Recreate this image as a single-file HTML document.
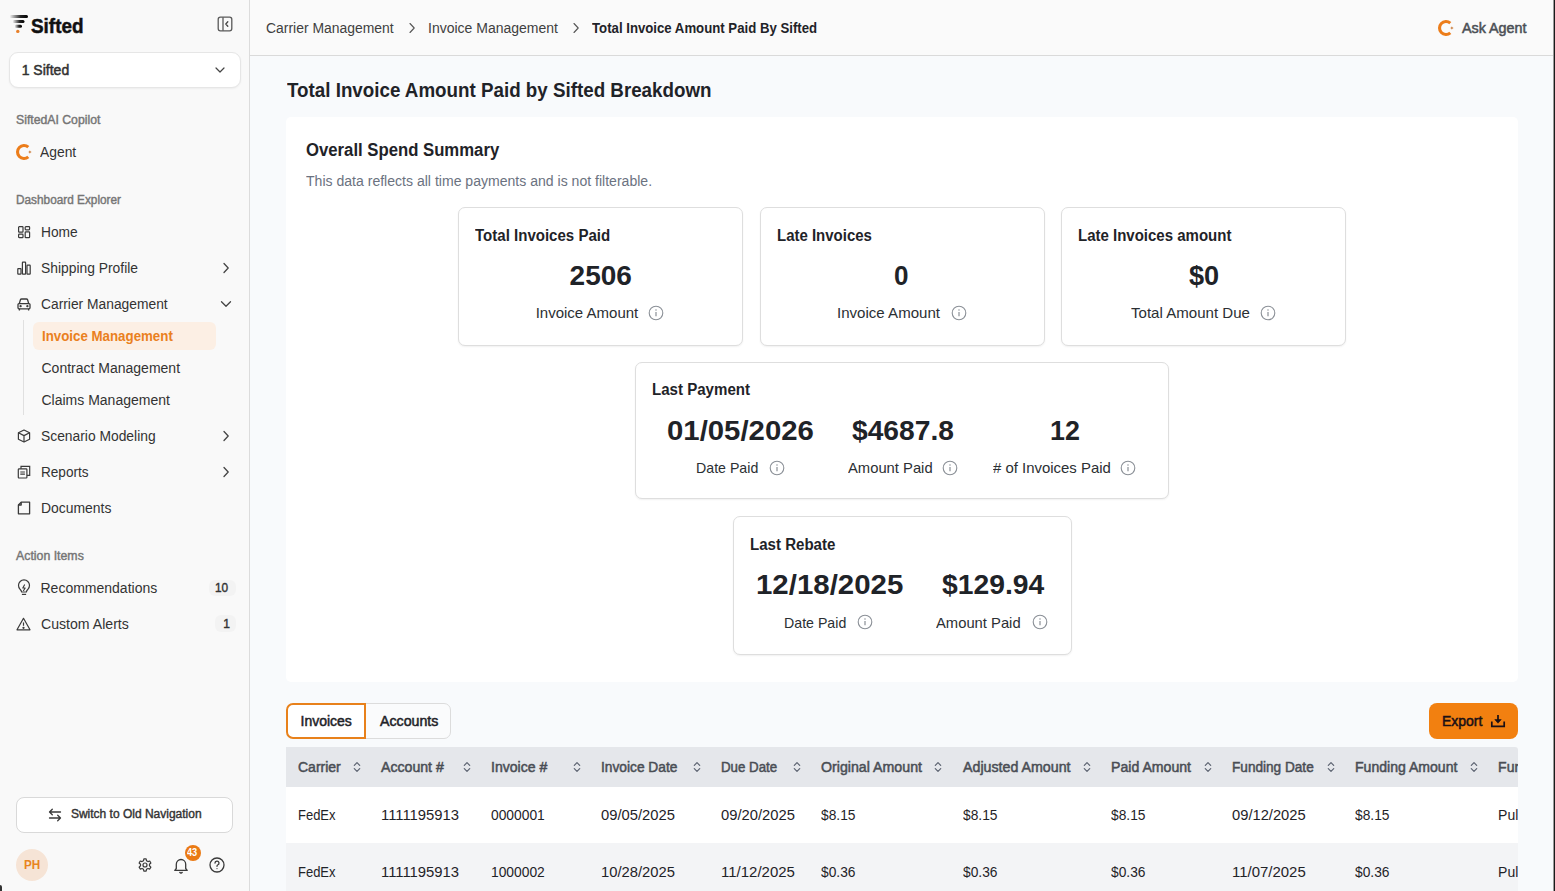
<!DOCTYPE html>
<html><head><meta charset="utf-8">
<style>
*{box-sizing:border-box;margin:0;padding:0}
html,body{width:1555px;height:891px;overflow:hidden}
body{font-family:"Liberation Sans",sans-serif;background:#f8fafc;color:#1f2328;position:relative}
.a{position:absolute;white-space:nowrap;transform-origin:0 50%}
.box{position:absolute}
svg.a{overflow:visible}
</style></head><body>
<!-- sidebar -->
<div class="box" style="left:0;top:0;width:250px;height:891px;background:#f9f9f9;border-right:1px solid #dcdcdc"></div>
<!-- header -->
<div class="box" style="left:250px;top:0;width:1305px;height:56px;background:#fafafa;border-bottom:1px solid #dadada"></div>
<!-- right dark edge -->
<div class="box" style="left:1553px;top:0;width:1px;height:891px;background:#9a9a9a"></div><div class="box" style="left:1554px;top:0;width:1px;height:891px;background:#1a1a1a"></div>

<!-- logo -->
<svg class="a" style="left:8px;top:13px" width="22" height="22" viewBox="0 0 22 22">
<defs><linearGradient id="lg" x1="0" x2="1" y1="0" y2="0"><stop offset="0" stop-color="#000" stop-opacity="0"/><stop offset="0.6" stop-color="#000" stop-opacity="0.85"/><stop offset="1" stop-color="#000"/></linearGradient></defs>
<rect x="1.5" y="2" width="18.5" height="3" rx="1.5" fill="url(#lg)"/>
<rect x="4.5" y="7" width="12" height="3" rx="1.5" fill="url(#lg)"/>
<rect x="6.5" y="11.8" width="7.5" height="3" rx="1.5" fill="url(#lg)"/>
<circle cx="9.8" cy="18.4" r="1.7" fill="#e8802a"/>
</svg>
<!-- collapse icon -->
<svg class="a" style="left:217px;top:16px" width="16" height="16" viewBox="0 0 16 16"><rect x="1.2" y="1.2" width="13.6" height="13.6" rx="2.2" fill="none" stroke="#5a5a5a" stroke-width="1.3"/><line x1="6" y1="1.2" x2="6" y2="14.8" stroke="#5a5a5a" stroke-width="1.3"/><path d="M10.8 5.8 L8.8 8 L10.8 10.2" fill="none" stroke="#444" stroke-width="1.3" stroke-linecap="round" stroke-linejoin="round"/></svg>

<!-- org dropdown -->
<div class="box" style="left:9px;top:52px;width:232px;height:36px;background:#fff;border:1px solid #e6e6e6;border-radius:9px;box-shadow:0 1px 2px rgba(0,0,0,0.05)"></div>
<svg class="a" style="left:213.5px;top:66px" width="12" height="8" viewBox="0 0 12 8"><path d="M2 2 L6 6 L10 2" fill="none" stroke="#444" stroke-width="1.2" stroke-linecap="round" stroke-linejoin="round"/></svg>

<svg class="a" style="left:16px;top:144px" width="16" height="16" viewBox="0 0 16 16"><path d="M12.3 3.1 A6.5 6.5 0 1 0 12.3 12.9" fill="none" stroke="#ec7d1a" stroke-width="3.1" stroke-linecap="butt"/><path d="M13.9 6.2 L14.4 7.5 L15.7 8 L14.4 8.5 L13.9 9.8 L13.4 8.5 L12.1 8 L13.4 7.5 Z" fill="#c46a1f"/></svg>

<!-- nav icons -->
<svg class="a" style="left:17px;top:225px" width="14" height="14" viewBox="0 0 14 14" fill="none" stroke="#3a3a3a" stroke-width="1.2">
<rect x="1.6" y="1.6" width="4.4" height="5.6" rx="0.7"/><rect x="1.6" y="9.2" width="4.4" height="3.4" rx="0.7"/><rect x="8.2" y="1.6" width="4.4" height="3.2" rx="0.7"/><rect x="8.2" y="6.8" width="4.4" height="5.8" rx="0.7"/></svg>
<svg class="a" style="left:17px;top:261px" width="14" height="14" viewBox="0 0 14 14" fill="none" stroke="#3a3a3a" stroke-width="1.2">
<rect x="0.8" y="7.6" width="3.2" height="5.6" rx="0.5"/><rect x="5.4" y="1.2" width="3.2" height="12" rx="0.5"/><rect x="10" y="4.2" width="3.2" height="9" rx="0.5"/></svg>
<svg class="a" style="left:17px;top:297px" width="14" height="15" viewBox="0 0 14 15" fill="none" stroke="#3a3a3a" stroke-width="1.3">
<path d="M2.3 6.6 L3.4 2.8 Q3.7 2 4.6 2 L9.4 2 Q10.3 2 10.6 2.8 L11.7 6.6"/><rect x="1" y="6.6" width="12" height="5.2" rx="1"/><path d="M2.4 11.8 V13.6 M11.6 11.8 V13.6"/><circle cx="3.6" cy="9.2" r="0.5" fill="#3a3a3a"/><circle cx="10.4" cy="9.2" r="0.5" fill="#3a3a3a"/></svg>
<svg class="a" style="left:221.5px;top:262px" width="8" height="12" viewBox="0 0 8 12"><path d="M2 1.5 L6.2 6 L2 10.5" fill="none" stroke="#444" stroke-width="1.3" stroke-linecap="round" stroke-linejoin="round"/></svg>
<svg class="a" style="left:219.5px;top:300px" width="12" height="8" viewBox="0 0 12 8"><path d="M1.5 1.8 L6 6.2 L10.5 1.8" fill="none" stroke="#444" stroke-width="1.3" stroke-linecap="round" stroke-linejoin="round"/></svg>
<!-- subnav line -->
<div class="box" style="left:23px;top:320px;width:1px;height:95px;background:#e0e0e0"></div>
<!-- active sub -->
<div class="box" style="left:33px;top:322px;width:183px;height:28px;background:#fcefe4;border-radius:6px"></div>

<svg class="a" style="left:17px;top:429px" width="14" height="14" viewBox="0 0 14 14" fill="none" stroke="#3a3a3a" stroke-width="1.2" stroke-linejoin="round">
<path d="M7 1 L12.6 3.8 V10.2 L7 13 L1.4 10.2 V3.8 Z"/><path d="M1.4 3.8 L7 6.6 L12.6 3.8 M7 6.6 V13"/></svg>
<svg class="a" style="left:221.5px;top:466px" width="8" height="12" viewBox="0 0 8 12"><path d="M2 1.5 L6.2 6 L2 10.5" fill="none" stroke="#444" stroke-width="1.3" stroke-linecap="round" stroke-linejoin="round"/></svg>
<svg class="a" style="left:17px;top:465px" width="14" height="14" viewBox="0 0 14 14" fill="none" stroke="#3a3a3a" stroke-width="1.2">
<rect x="1.3" y="3.8" width="8.6" height="9.2" rx="0.8"/><path d="M4 3.8 V1.3 H12.7 V10.4 H9.9"/><path d="M3.3 7 H7.9 M3.3 9.2 H7.9"/></svg>
<svg class="a" style="left:221.5px;top:430px" width="8" height="12" viewBox="0 0 8 12"><path d="M2 1.5 L6.2 6 L2 10.5" fill="none" stroke="#444" stroke-width="1.3" stroke-linecap="round" stroke-linejoin="round"/></svg>
<svg class="a" style="left:17px;top:501px" width="14" height="14" viewBox="0 0 14 14" fill="none" stroke="#3a3a3a" stroke-width="1.3" stroke-linejoin="round">
<path d="M4.2 1.2 H12.6 V12.8 H1.4 V4 Z"/><path d="M1.4 4 H4.2 V1.2" /></svg>

<svg class="a" style="left:16.5px;top:580.5px" width="14" height="15" viewBox="0 0 14 15" fill="none" stroke="#3a3a3a" stroke-width="1.2" stroke-linejoin="round">
<path d="M4.6 11 Q4.5 9.6 3 8.2 A5.5 5.5 0 1 1 11 8.2 Q9.5 9.6 9.4 11 Z"/><path d="M4.9 13.4 H9.1"/><path d="M7.7 3.4 L5.8 7 H8.2 L6.3 10" stroke-width="1.1"/></svg>
<svg class="a" style="left:16px;top:616.8px" width="15" height="14" viewBox="0 0 15 14" fill="none" stroke="#3a3a3a" stroke-width="1.2" stroke-linejoin="round">
<path d="M7.5 1.3 L14 12.8 H1 Z"/><path d="M7.5 5.4 V8.8"/><circle cx="7.5" cy="10.8" r="0.55" fill="#3a3a3a"/></svg>
<div class="box" style="left:209px;top:580px;width:27px;height:16px;background:#f3f3f3;border-radius:6px"></div>
<div class="box" style="left:214.5px;top:615px;width:21.5px;height:17px;background:#f3f3f3;border-radius:6px"></div>

<!-- switch nav -->
<div class="box" style="left:16px;top:797px;width:217px;height:36px;background:#fff;border:1px solid #d9d9d9;border-radius:8px"></div>
<svg class="a" style="left:48px;top:808px" width="14" height="14" viewBox="0 0 14 14" fill="none" stroke="#3a3a3a" stroke-width="1.3" stroke-linecap="round" stroke-linejoin="round">
<path d="M12.5 4 H1.5 M4.3 1.2 L1.5 4 L4.3 6.8"/><path d="M1.5 10 H12.5 M9.7 7.2 L12.5 10 L9.7 12.8"/></svg>
<!-- avatar -->
<div class="box" style="left:16px;top:849px;width:32px;height:32px;background:#f6e4d6;border-radius:50%"></div>
<!-- gear -->
<svg class="a" style="left:137px;top:857px" width="16" height="16" viewBox="0 0 24 24" fill="none" stroke="#3a3a3a" stroke-width="1.8" stroke-linejoin="round">
<path d="M10.3 2.3 H13.7 L14.3 5.1 L16.4 6.3 L19.1 5.4 L20.8 8.3 L18.7 10.2 V12.6 L20.8 14.6 L19.1 17.5 L16.4 16.6 L14.3 17.8 L13.7 20.6 H10.3 L9.7 17.8 L7.6 16.6 L4.9 17.5 L3.2 14.6 L5.3 12.6 V10.2 L3.2 8.3 L4.9 5.4 L7.6 6.3 L9.7 5.1 Z" transform="translate(0,0.6)"/><circle cx="12" cy="12" r="3"/></svg>
<!-- bell -->
<svg class="a" style="left:173px;top:857px" width="16" height="17" viewBox="0 0 16 17" fill="none" stroke="#3a3a3a" stroke-width="1.3" stroke-linejoin="round">
<path d="M3.3 11.5 V7.2 A4.7 4.7 0 0 1 12.7 7.2 V11.5 L14.2 13.4 H1.8 Z"/><path d="M6.8 15.4 L8 16.2 L9.2 15.4" stroke-linecap="round"/></svg>
<div class="box" style="left:185px;top:845px;width:16px;height:16px;background:#ea7a14;border-radius:50%"></div>
<!-- help -->
<svg class="a" style="left:209px;top:857px" width="16" height="16" viewBox="0 0 16 16" fill="none" stroke="#3a3a3a" stroke-width="1.3">
<circle cx="8" cy="8" r="7"/><path d="M6 6.1 A2 2 0 1 1 8.6 8 Q8 8.3 8 9.3" stroke-linecap="round"/><circle cx="8" cy="11.6" r="0.6" fill="#3a3a3a" stroke="none"/></svg>
<!-- bottom-left dark corner -->
<div class="box" style="left:0;top:885px;width:2px;height:6px;background:#333;border-radius:0 2px 0 0"></div>

<!-- header -->
<svg class="a" style="left:408px;top:22px" width="8" height="12" viewBox="0 0 8 12"><path d="M2 1.5 L6.2 6 L2 10.5" fill="none" stroke="#555" stroke-width="1.1" stroke-linecap="round" stroke-linejoin="round"/></svg>
<svg class="a" style="left:572px;top:22px" width="8" height="12" viewBox="0 0 8 12"><path d="M2 1.5 L6.2 6 L2 10.5" fill="none" stroke="#555" stroke-width="1.1" stroke-linecap="round" stroke-linejoin="round"/></svg>
<svg class="a" style="left:1437.5px;top:19.5px" width="16" height="16" viewBox="0 0 16 16"><path d="M12.3 3.1 A6.5 6.5 0 1 0 12.3 12.9" fill="none" stroke="#ec7d1a" stroke-width="3.1" stroke-linecap="butt"/><path d="M13.9 6.2 L14.4 7.5 L15.7 8 L14.4 8.5 L13.9 9.8 L13.4 8.5 L12.1 8 L13.4 7.5 Z" fill="#c46a1f"/></svg>

<!-- summary panel -->
<div class="box" style="left:286px;top:117px;width:1232px;height:565px;background:#fff;border-radius:5px"></div>
<!-- cards -->
<div class="box" style="left:458px;top:207px;width:285px;height:139px;background:#fff;border:1px solid #dedede;border-radius:7px;box-shadow:0 1px 2px rgba(0,0,0,0.06)"></div>
<div class="box" style="left:759.5px;top:207px;width:285px;height:139px;background:#fff;border:1px solid #dedede;border-radius:7px;box-shadow:0 1px 2px rgba(0,0,0,0.06)"></div>
<div class="box" style="left:1061px;top:207px;width:285px;height:139px;background:#fff;border:1px solid #dedede;border-radius:7px;box-shadow:0 1px 2px rgba(0,0,0,0.06)"></div>
<div class="box" style="left:635px;top:362px;width:534px;height:137px;background:#fff;border:1px solid #dedede;border-radius:7px;box-shadow:0 1px 2px rgba(0,0,0,0.06)"></div>
<div class="box" style="left:733px;top:516px;width:339px;height:139px;background:#fff;border:1px solid #dedede;border-radius:7px;box-shadow:0 1px 2px rgba(0,0,0,0.06)"></div>
<svg class="a" style="left:648.3px;top:304.6px" width="16" height="16" viewBox="0 0 16 16"><circle cx="8" cy="8" r="6.8" fill="none" stroke="#8a8f96" stroke-width="1.1"/><line x1="8" y1="7" x2="8" y2="11.3" stroke="#8a8f96" stroke-width="1.2"/><circle cx="8" cy="4.9" r="0.75" fill="#8a8f96"/></svg>
<svg class="a" style="left:950.7px;top:304.6px" width="16" height="16" viewBox="0 0 16 16"><circle cx="8" cy="8" r="6.8" fill="none" stroke="#8a8f96" stroke-width="1.1"/><line x1="8" y1="7" x2="8" y2="11.3" stroke="#8a8f96" stroke-width="1.2"/><circle cx="8" cy="4.9" r="0.75" fill="#8a8f96"/></svg>
<svg class="a" style="left:1259.8px;top:304.6px" width="16" height="16" viewBox="0 0 16 16"><circle cx="8" cy="8" r="6.8" fill="none" stroke="#8a8f96" stroke-width="1.1"/><line x1="8" y1="7" x2="8" y2="11.3" stroke="#8a8f96" stroke-width="1.2"/><circle cx="8" cy="4.9" r="0.75" fill="#8a8f96"/></svg>
<svg class="a" style="left:768.6px;top:459.8px" width="16" height="16" viewBox="0 0 16 16"><circle cx="8" cy="8" r="6.8" fill="none" stroke="#8a8f96" stroke-width="1.1"/><line x1="8" y1="7" x2="8" y2="11.3" stroke="#8a8f96" stroke-width="1.2"/><circle cx="8" cy="4.9" r="0.75" fill="#8a8f96"/></svg>
<svg class="a" style="left:942.4px;top:459.8px" width="16" height="16" viewBox="0 0 16 16"><circle cx="8" cy="8" r="6.8" fill="none" stroke="#8a8f96" stroke-width="1.1"/><line x1="8" y1="7" x2="8" y2="11.3" stroke="#8a8f96" stroke-width="1.2"/><circle cx="8" cy="4.9" r="0.75" fill="#8a8f96"/></svg>
<svg class="a" style="left:1120.1px;top:459.8px" width="16" height="16" viewBox="0 0 16 16"><circle cx="8" cy="8" r="6.8" fill="none" stroke="#8a8f96" stroke-width="1.1"/><line x1="8" y1="7" x2="8" y2="11.3" stroke="#8a8f96" stroke-width="1.2"/><circle cx="8" cy="4.9" r="0.75" fill="#8a8f96"/></svg>
<svg class="a" style="left:857.3px;top:613.8px" width="16" height="16" viewBox="0 0 16 16"><circle cx="8" cy="8" r="6.8" fill="none" stroke="#8a8f96" stroke-width="1.1"/><line x1="8" y1="7" x2="8" y2="11.3" stroke="#8a8f96" stroke-width="1.2"/><circle cx="8" cy="4.9" r="0.75" fill="#8a8f96"/></svg>
<svg class="a" style="left:1031.9px;top:613.8px" width="16" height="16" viewBox="0 0 16 16"><circle cx="8" cy="8" r="6.8" fill="none" stroke="#8a8f96" stroke-width="1.1"/><line x1="8" y1="7" x2="8" y2="11.3" stroke="#8a8f96" stroke-width="1.2"/><circle cx="8" cy="4.9" r="0.75" fill="#8a8f96"/></svg>

<!-- tabs -->
<div class="box" style="left:365px;top:703px;width:86px;height:36px;background:#fafbfc;border:1px solid #dcdcdc;border-radius:0 7px 7px 0"></div>
<div class="box" style="left:286px;top:703px;width:80px;height:36px;background:#fff;border:2px solid #e8811b;border-radius:7px 0 0 7px"></div>
<!-- export -->
<div class="box" style="left:1429px;top:703px;width:89px;height:36px;background:#f28010;border-radius:8px"></div>
<svg class="a" style="left:1490px;top:714px" width="16" height="14" viewBox="0 0 16 14" fill="none" stroke="#1a1016" stroke-width="1.7">
<path d="M1.8 7.4 V12.3 H14.2 V7.4"/><path d="M8 1 V6.5"/><path d="M4.8 5.6 H11.2 L8 9.2 Z" fill="#1a1016" stroke-width="0.6" stroke-linejoin="round"/></svg>

<!-- table -->
<div class="box" style="left:286px;top:747px;width:1232px;height:40px;background:#e5e7eb;border-radius:0 3px 0 0"></div>
<div class="box" style="left:286px;top:787px;width:1232px;height:56px;background:#fff"></div>
<div class="box" style="left:286px;top:843px;width:1232px;height:56px;background:#f3f4f6"></div>
<svg class="a" style="left:351.5px;top:761px" width="10" height="12" viewBox="0 0 10 12"><path d="M2.3 4.3 L5 1.6 L7.7 4.3 M2.3 7.7 L5 10.4 L7.7 7.7" fill="none" stroke="#5b6270" stroke-width="1.2" stroke-linecap="round" stroke-linejoin="round"/></svg><svg class="a" style="left:462.3px;top:761px" width="10" height="12" viewBox="0 0 10 12"><path d="M2.3 4.3 L5 1.6 L7.7 4.3 M2.3 7.7 L5 10.4 L7.7 7.7" fill="none" stroke="#5b6270" stroke-width="1.2" stroke-linecap="round" stroke-linejoin="round"/></svg><svg class="a" style="left:571.7px;top:761px" width="10" height="12" viewBox="0 0 10 12"><path d="M2.3 4.3 L5 1.6 L7.7 4.3 M2.3 7.7 L5 10.4 L7.7 7.7" fill="none" stroke="#5b6270" stroke-width="1.2" stroke-linecap="round" stroke-linejoin="round"/></svg><svg class="a" style="left:691.7px;top:761px" width="10" height="12" viewBox="0 0 10 12"><path d="M2.3 4.3 L5 1.6 L7.7 4.3 M2.3 7.7 L5 10.4 L7.7 7.7" fill="none" stroke="#5b6270" stroke-width="1.2" stroke-linecap="round" stroke-linejoin="round"/></svg><svg class="a" style="left:791.7px;top:761px" width="10" height="12" viewBox="0 0 10 12"><path d="M2.3 4.3 L5 1.6 L7.7 4.3 M2.3 7.7 L5 10.4 L7.7 7.7" fill="none" stroke="#5b6270" stroke-width="1.2" stroke-linecap="round" stroke-linejoin="round"/></svg><svg class="a" style="left:932.9px;top:761px" width="10" height="12" viewBox="0 0 10 12"><path d="M2.3 4.3 L5 1.6 L7.7 4.3 M2.3 7.7 L5 10.4 L7.7 7.7" fill="none" stroke="#5b6270" stroke-width="1.2" stroke-linecap="round" stroke-linejoin="round"/></svg><svg class="a" style="left:1081.6px;top:761px" width="10" height="12" viewBox="0 0 10 12"><path d="M2.3 4.3 L5 1.6 L7.7 4.3 M2.3 7.7 L5 10.4 L7.7 7.7" fill="none" stroke="#5b6270" stroke-width="1.2" stroke-linecap="round" stroke-linejoin="round"/></svg><svg class="a" style="left:1202.9px;top:761px" width="10" height="12" viewBox="0 0 10 12"><path d="M2.3 4.3 L5 1.6 L7.7 4.3 M2.3 7.7 L5 10.4 L7.7 7.7" fill="none" stroke="#5b6270" stroke-width="1.2" stroke-linecap="round" stroke-linejoin="round"/></svg><svg class="a" style="left:1325.5px;top:761px" width="10" height="12" viewBox="0 0 10 12"><path d="M2.3 4.3 L5 1.6 L7.7 4.3 M2.3 7.7 L5 10.4 L7.7 7.7" fill="none" stroke="#5b6270" stroke-width="1.2" stroke-linecap="round" stroke-linejoin="round"/></svg><svg class="a" style="left:1468.7px;top:761px" width="10" height="12" viewBox="0 0 10 12"><path d="M2.3 4.3 L5 1.6 L7.7 4.3 M2.3 7.7 L5 10.4 L7.7 7.7" fill="none" stroke="#5b6270" stroke-width="1.2" stroke-linecap="round" stroke-linejoin="round"/></svg>

<span class="a" style="left:30.5px;top:15.02px;font-size:21px;line-height:21px;font-weight:700;-webkit-text-stroke:0.5px #111;color:#111;transform:scaleX(0.8998);">Sifted</span>
<span class="a" style="left:21.7px;top:63.15px;font-size:14px;line-height:14px;font-weight:400;-webkit-text-stroke:0.5px #333;color:#333;">1 Sifted</span>
<span class="a" style="left:16.0px;top:113.84px;font-size:12px;line-height:12px;font-weight:400;-webkit-text-stroke:0.4px #757575;color:#757575;transform:scaleX(1.0203);">SiftedAI Copilot</span>
<span class="a" style="left:40.2px;top:144.85px;font-size:14px;line-height:14px;font-weight:400;color:#333;transform:scaleX(0.9892);">Agent</span>
<span class="a" style="left:16.0px;top:194.24px;font-size:12px;line-height:12px;font-weight:400;-webkit-text-stroke:0.4px #757575;color:#757575;transform:scaleX(0.9838);">Dashboard Explorer</span>
<span class="a" style="left:40.5px;top:224.85px;font-size:14px;line-height:14px;font-weight:400;color:#333;transform:scaleX(0.9824);">Home</span>
<span class="a" style="left:40.5px;top:261.05px;font-size:14px;line-height:14px;font-weight:400;color:#333;transform:scaleX(0.9892);">Shipping Profile</span>
<span class="a" style="left:40.5px;top:297.15px;font-size:14px;line-height:14px;font-weight:400;color:#333;transform:scaleX(0.9868);">Carrier Management</span>
<span class="a" style="left:41.5px;top:328.85px;font-size:14px;line-height:14px;font-weight:700;color:#ea8020;transform:scaleX(0.9499);">Invoice Management</span>
<span class="a" style="left:41.5px;top:361.05px;font-size:14px;line-height:14px;font-weight:400;color:#333;">Contract Management</span>
<span class="a" style="left:41.5px;top:392.85px;font-size:14px;line-height:14px;font-weight:400;color:#333;">Claims Management</span>
<span class="a" style="left:40.5px;top:429.15px;font-size:14px;line-height:14px;font-weight:400;color:#333;transform:scaleX(0.9882);">Scenario Modeling</span>
<span class="a" style="left:40.5px;top:465.15px;font-size:14px;line-height:14px;font-weight:400;color:#333;transform:scaleX(0.9708);">Reports</span>
<span class="a" style="left:40.5px;top:501.15px;font-size:14px;line-height:14px;font-weight:400;color:#333;transform:scaleX(0.9942);">Documents</span>
<span class="a" style="left:16.0px;top:549.64px;font-size:12px;line-height:12px;font-weight:400;-webkit-text-stroke:0.4px #757575;color:#757575;transform:scaleX(1.0268);">Action Items</span>
<span class="a" style="left:40.5px;top:580.85px;font-size:14px;line-height:14px;font-weight:400;color:#333;">Recommendations</span>
<span class="a" style="left:40.5px;top:616.85px;font-size:14px;line-height:14px;font-weight:400;color:#333;transform:scaleX(1.0076);">Custom Alerts</span>
<span class="a" style="left:215.4px;top:582.14px;font-size:12px;line-height:12px;font-weight:400;-webkit-text-stroke:0.4px #333;color:#333;transform:scaleX(0.9881);">10</span>
<span class="a" style="left:223.2px;top:618.14px;font-size:12px;line-height:12px;font-weight:400;-webkit-text-stroke:0.4px #333;color:#333;">1</span>
<span class="a" style="left:70.9px;top:808.44px;font-size:12px;line-height:12px;font-weight:400;-webkit-text-stroke:0.4px #333;color:#333;">Switch to Old Navigation</span>
<span class="a" style="left:24.2px;top:858.64px;font-size:12px;line-height:12px;font-weight:700;color:#e8841f;transform:scaleX(0.9717);">PH</span>
<span class="a" style="left:186.5px;top:848.03px;font-size:10px;line-height:10px;font-weight:700;color:#fff;transform:scaleX(0.9200);">43</span>
<span class="a" style="left:266.1px;top:21.05px;font-size:14px;line-height:14px;font-weight:400;color:#404040;transform:scaleX(0.9938);">Carrier Management</span>
<span class="a" style="left:428.0px;top:21.05px;font-size:14px;line-height:14px;font-weight:400;color:#404040;">Invoice Management</span>
<span class="a" style="left:592.0px;top:21.05px;font-size:14px;line-height:14px;font-weight:700;color:#1f2328;transform:scaleX(0.9426);">Total Invoice Amount Paid By Sifted</span>
<span class="a" style="left:1461.5px;top:20.95px;font-size:14px;line-height:14px;font-weight:400;-webkit-text-stroke:0.5px #4b4f55;color:#4b4f55;transform:scaleX(1.0230);">Ask Agent</span>
<span class="a" style="left:287.0px;top:80.47px;font-size:20px;line-height:20px;font-weight:700;color:#1f2328;transform:scaleX(0.9386);">Total Invoice Amount Paid by Sifted Breakdown</span>
<span class="a" style="left:305.9px;top:141.16px;font-size:18px;line-height:18px;font-weight:700;color:#1f2328;transform:scaleX(0.9284);">Overall Spend Summary</span>
<span class="a" style="left:305.9px;top:174.15px;font-size:14px;line-height:14px;font-weight:400;color:#6b7280;transform:scaleX(1.0040);">This data reflects all time payments and is not filterable.</span>
<span class="a" style="left:475.3px;top:227.76px;font-size:16px;line-height:16px;font-weight:700;color:#1f2328;transform:scaleX(0.9405);">Total Invoices Paid</span>
<span class="a" style="left:569.6px;top:262.40px;font-size:28px;line-height:28px;font-weight:700;color:#1f2328;">2506</span>
<span class="a" style="left:535.7px;top:305.30px;font-size:15px;line-height:15px;font-weight:400;color:#2b2f33;">Invoice Amount</span>
<span class="a" style="left:776.7px;top:227.76px;font-size:16px;line-height:16px;font-weight:700;color:#1f2328;transform:scaleX(0.9361);">Late Invoices</span>
<span class="a" style="left:894.4px;top:262.40px;font-size:28px;line-height:28px;font-weight:700;color:#1f2328;transform:scaleX(0.9308);">0</span>
<span class="a" style="left:837.1px;top:305.30px;font-size:15px;line-height:15px;font-weight:400;color:#2b2f33;transform:scaleX(1.0043);">Invoice Amount</span>
<span class="a" style="left:1078.4px;top:227.76px;font-size:16px;line-height:16px;font-weight:700;color:#1f2328;transform:scaleX(0.9377);">Late Invoices amount</span>
<span class="a" style="left:1188.6px;top:262.40px;font-size:28px;line-height:28px;font-weight:700;color:#1f2328;transform:scaleX(0.9693);">$0</span>
<span class="a" style="left:1130.5px;top:305.30px;font-size:15px;line-height:15px;font-weight:400;color:#2b2f33;transform:scaleX(1.0042);">Total Amount Due</span>
<span class="a" style="left:652.4px;top:382.46px;font-size:16px;line-height:16px;font-weight:700;color:#1f2328;transform:scaleX(0.9419);">Last Payment</span>
<span class="a" style="left:666.8px;top:417.40px;font-size:28px;line-height:28px;font-weight:700;color:#1f2328;transform:scaleX(1.0482);">01/05/2026</span>
<span class="a" style="left:852.3px;top:417.40px;font-size:28px;line-height:28px;font-weight:700;color:#1f2328;transform:scaleX(1.0067);">$4687.8</span>
<span class="a" style="left:1050.3px;top:417.40px;font-size:28px;line-height:28px;font-weight:700;color:#1f2328;transform:scaleX(0.9597);">12</span>
<span class="a" style="left:695.6px;top:460.30px;font-size:15px;line-height:15px;font-weight:400;color:#2b2f33;transform:scaleX(0.9457);">Date Paid</span>
<span class="a" style="left:847.6px;top:460.30px;font-size:15px;line-height:15px;font-weight:400;color:#2b2f33;transform:scaleX(0.9850);">Amount Paid</span>
<span class="a" style="left:992.7px;top:460.30px;font-size:15px;line-height:15px;font-weight:400;color:#2b2f33;transform:scaleX(0.9949);"># of Invoices Paid</span>
<span class="a" style="left:749.6px;top:537.06px;font-size:16px;line-height:16px;font-weight:700;color:#1f2328;transform:scaleX(0.9415);">Last Rebate</span>
<span class="a" style="left:756.1px;top:571.20px;font-size:28px;line-height:28px;font-weight:700;color:#1f2328;transform:scaleX(1.0511);">12/18/2025</span>
<span class="a" style="left:941.6px;top:571.20px;font-size:28px;line-height:28px;font-weight:700;color:#1f2328;transform:scaleX(1.0097);">$129.94</span>
<span class="a" style="left:783.8px;top:614.50px;font-size:15px;line-height:15px;font-weight:400;color:#2b2f33;transform:scaleX(0.9457);">Date Paid</span>
<span class="a" style="left:936.2px;top:614.50px;font-size:15px;line-height:15px;font-weight:400;color:#2b2f33;transform:scaleX(0.9850);">Amount Paid</span>
<span class="a" style="left:300.5px;top:713.95px;font-size:14px;line-height:14px;font-weight:400;-webkit-text-stroke:0.5px #1f2328;color:#1f2328;">Invoices</span>
<span class="a" style="left:379.5px;top:713.95px;font-size:14px;line-height:14px;font-weight:400;-webkit-text-stroke:0.5px #1f2328;color:#1f2328;transform:scaleX(1.0140);">Accounts</span>
<span class="a" style="left:1441.9px;top:714.05px;font-size:14px;line-height:14px;font-weight:400;-webkit-text-stroke:0.5px #1a1016;color:#1a1016;">Export</span>
<span class="a" style="left:298.0px;top:760.15px;font-size:14px;line-height:14px;font-weight:400;-webkit-text-stroke:0.5px #4a4e55;color:#4a4e55;">Carrier</span>
<span class="a" style="left:381.0px;top:760.15px;font-size:14px;line-height:14px;font-weight:400;-webkit-text-stroke:0.5px #4a4e55;color:#4a4e55;transform:scaleX(1.0086);">Account #</span>
<span class="a" style="left:490.8px;top:760.15px;font-size:14px;line-height:14px;font-weight:400;-webkit-text-stroke:0.5px #4a4e55;color:#4a4e55;transform:scaleX(1.0045);">Invoice #</span>
<span class="a" style="left:600.8px;top:760.15px;font-size:14px;line-height:14px;font-weight:400;-webkit-text-stroke:0.5px #4a4e55;color:#4a4e55;transform:scaleX(0.9817);">Invoice Date</span>
<span class="a" style="left:720.6px;top:760.15px;font-size:14px;line-height:14px;font-weight:400;-webkit-text-stroke:0.5px #4a4e55;color:#4a4e55;transform:scaleX(0.9500);">Due Date</span>
<span class="a" style="left:820.8px;top:760.15px;font-size:14px;line-height:14px;font-weight:400;-webkit-text-stroke:0.5px #4a4e55;color:#4a4e55;transform:scaleX(1.0140);">Original Amount</span>
<span class="a" style="left:962.8px;top:760.15px;font-size:14px;line-height:14px;font-weight:400;-webkit-text-stroke:0.5px #4a4e55;color:#4a4e55;transform:scaleX(1.0155);">Adjusted Amount</span>
<span class="a" style="left:1111.4px;top:760.15px;font-size:14px;line-height:14px;font-weight:400;-webkit-text-stroke:0.5px #4a4e55;color:#4a4e55;transform:scaleX(1.0077);">Paid Amount</span>
<span class="a" style="left:1232.4px;top:760.15px;font-size:14px;line-height:14px;font-weight:400;-webkit-text-stroke:0.5px #4a4e55;color:#4a4e55;transform:scaleX(0.9719);">Funding Date</span>
<span class="a" style="left:1355.2px;top:760.15px;font-size:14px;line-height:14px;font-weight:400;-webkit-text-stroke:0.5px #4a4e55;color:#4a4e55;transform:scaleX(1.0042);">Funding Amount</span>
<span class="a" style="left:298.0px;top:807.95px;font-size:14px;line-height:14px;font-weight:400;color:#1f2328;transform:scaleX(0.9266);">FedEx</span>
<span class="a" style="left:381.0px;top:807.95px;font-size:14px;line-height:14px;font-weight:400;color:#1f2328;transform:scaleX(1.0594);">1111195913</span>
<span class="a" style="left:490.8px;top:807.95px;font-size:14px;line-height:14px;font-weight:400;color:#1f2328;transform:scaleX(0.9869);">0000001</span>
<span class="a" style="left:600.8px;top:807.95px;font-size:14px;line-height:14px;font-weight:400;color:#1f2328;transform:scaleX(1.0545);">09/05/2025</span>
<span class="a" style="left:720.6px;top:807.95px;font-size:14px;line-height:14px;font-weight:400;color:#1f2328;transform:scaleX(1.0545);">09/20/2025</span>
<span class="a" style="left:820.8px;top:807.95px;font-size:14px;line-height:14px;font-weight:400;color:#1f2328;transform:scaleX(0.9844);">$8.15</span>
<span class="a" style="left:962.8px;top:807.95px;font-size:14px;line-height:14px;font-weight:400;color:#1f2328;transform:scaleX(0.9844);">$8.15</span>
<span class="a" style="left:1111.4px;top:807.95px;font-size:14px;line-height:14px;font-weight:400;color:#1f2328;transform:scaleX(0.9844);">$8.15</span>
<span class="a" style="left:1232.4px;top:807.95px;font-size:14px;line-height:14px;font-weight:400;color:#1f2328;transform:scaleX(1.0517);">09/12/2025</span>
<span class="a" style="left:1355.2px;top:807.95px;font-size:14px;line-height:14px;font-weight:400;color:#1f2328;transform:scaleX(0.9844);">$8.15</span>
<span class="a" style="left:298.0px;top:864.65px;font-size:14px;line-height:14px;font-weight:400;color:#1f2328;transform:scaleX(0.9266);">FedEx</span>
<span class="a" style="left:381.0px;top:864.65px;font-size:14px;line-height:14px;font-weight:400;color:#1f2328;transform:scaleX(1.0594);">1111195913</span>
<span class="a" style="left:490.8px;top:864.65px;font-size:14px;line-height:14px;font-weight:400;color:#1f2328;transform:scaleX(0.9869);">1000002</span>
<span class="a" style="left:600.8px;top:864.65px;font-size:14px;line-height:14px;font-weight:400;color:#1f2328;transform:scaleX(1.0545);">10/28/2025</span>
<span class="a" style="left:720.6px;top:864.65px;font-size:14px;line-height:14px;font-weight:400;color:#1f2328;transform:scaleX(1.0705);">11/12/2025</span>
<span class="a" style="left:820.8px;top:864.65px;font-size:14px;line-height:14px;font-weight:400;color:#1f2328;transform:scaleX(0.9844);">$0.36</span>
<span class="a" style="left:962.8px;top:864.65px;font-size:14px;line-height:14px;font-weight:400;color:#1f2328;transform:scaleX(0.9844);">$0.36</span>
<span class="a" style="left:1111.4px;top:864.65px;font-size:14px;line-height:14px;font-weight:400;color:#1f2328;transform:scaleX(0.9844);">$0.36</span>
<span class="a" style="left:1232.4px;top:864.65px;font-size:14px;line-height:14px;font-weight:400;color:#1f2328;transform:scaleX(1.0676);">11/07/2025</span>
<span class="a" style="left:1355.2px;top:864.65px;font-size:14px;line-height:14px;font-weight:400;color:#1f2328;transform:scaleX(0.9844);">$0.36</span>
<div class="box" style="left:286px;top:747px;width:1232px;height:144px;overflow:hidden"><span class="a" style="left:1212.1px;top:13.15px;font-size:14px;line-height:14px;font-weight:400;-webkit-text-stroke:0.5px #4a4e55;color:#4a4e55;">Fur</span><span class="a" style="left:1212.1px;top:60.95px;font-size:14px;line-height:14px;font-weight:400;color:#1f2328;">Pul</span><span class="a" style="left:1212.1px;top:117.65px;font-size:14px;line-height:14px;font-weight:400;color:#1f2328;">Pul</span></div>
</body></html>
